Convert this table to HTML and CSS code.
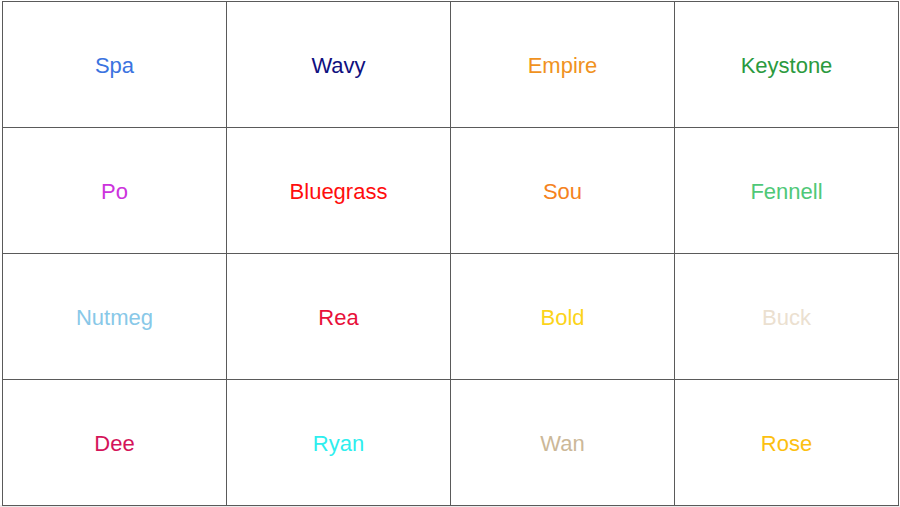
FILE: index.html
```html
<!DOCTYPE html>
<html>
<head>
<meta charset="utf-8">
<link rel="stylesheet" href="styles.css">
</head>
<body>
<div class="grid">
  <div class="cell c-spa">Spa</div>
  <div class="cell c-wavy">Wavy</div>
  <div class="cell c-empire">Empire</div>
  <div class="cell c-keystone">Keystone</div>
  <div class="cell c-po">Po</div>
  <div class="cell c-bluegrass">Bluegrass</div>
  <div class="cell c-sou">Sou</div>
  <div class="cell c-fennell">Fennell</div>
  <div class="cell c-nutmeg">Nutmeg</div>
  <div class="cell c-rea">Rea</div>
  <div class="cell c-bold">Bold</div>
  <div class="cell c-buck">Buck</div>
  <div class="cell c-dee">Dee</div>
  <div class="cell c-ryan">Ryan</div>
  <div class="cell c-wan">Wan</div>
  <div class="cell c-rose">Rose</div>
</div>
</body>
</html>
```
FILE: styles.css
```css
html, body {
  margin: 0;
  padding: 0;
  background: #ffffff;
  height: 507px;
  overflow: hidden;
}
body {
  padding: 1px 0 0 2px;
  box-sizing: border-box;
  font-family: "Liberation Sans", Arial, sans-serif;
  background: linear-gradient(#ffffff 505px, #ececec 505px);
}
.grid {
  display: grid;
  grid-template-columns: repeat(4, 224px);
  grid-template-rows: repeat(4, 126px);
  width: 897px;
  border-top: 1px solid #5a5a5a;
  border-left: 1px solid #5a5a5a;
  box-sizing: border-box;
  background: #ffffff;
}
.cell {
  border-right: 1px solid #5a5a5a;
  border-bottom: 1px solid #5a5a5a;
  display: flex;
  align-items: center;
  justify-content: center;
  font-size: 22px;
  padding-top: 2px;
}
.c-spa { color: #3b73e0; }
.c-wavy { color: #101080; }
.c-empire { color: #f0921e; }
.c-keystone { color: #2b9a3e; }
.c-po { color: #cc33dd; }
.c-bluegrass { color: #ff0d0d; }
.c-sou { color: #f58220; }
.c-fennell { color: #4fc878; }
.c-nutmeg { color: #88c8e8; }
.c-rea { color: #e8103a; }
.c-bold { color: #fcd41a; }
.c-buck { color: #ebe0d0; }
.c-dee { color: #d4145a; }
.c-ryan { color: #2eeeee; }
.c-wan { color: #ccb898; }
.c-rose { color: #fcc010; }
```
